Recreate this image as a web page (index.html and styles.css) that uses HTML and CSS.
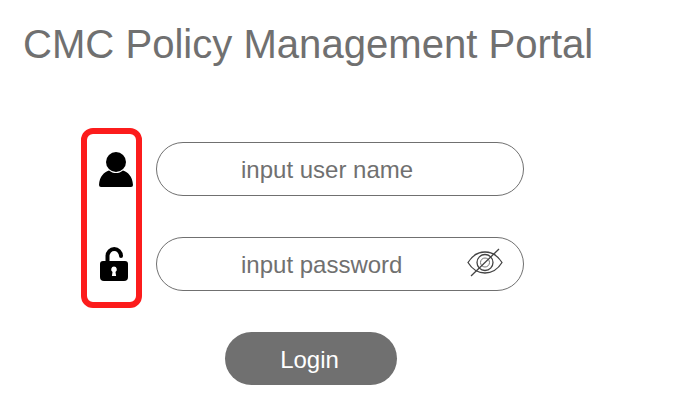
FILE: index.html
```html
<!DOCTYPE html>
<html>
  <head>
    <title>CMC Policy Management Portal</title>
    <link rel="stylesheet" href="styles.css">
  </head>
  <body>
    <h1 class="title">CMC Policy Management Portal</h1>
    <div class="login">
      <div class="icons">
        <svg class="icon-user" viewBox="0 0 34 35" width="34" height="35">
          <circle cx="17" cy="10" r="10" fill="#000"/>
          <path d="M10 18.500c4 3.400 10 3.400 14 0 5 1.600 9.500 6 10 14.500q0 2-2 2H2q-2 0-2-2c.5-8.500 5-12.900 10-14.500z" fill="#000"/>
        </svg>
        <svg class="icon-lock" viewBox="0 0 28 34" width="28" height="34">
          <path d="M7.500 15V9a6.750 7 0 0 1 13.500 0" fill="none" stroke="#000" stroke-width="4" stroke-linecap="round"/>
          <path d="M3 14h22q3 0 3 3v13q0 4-4 4H4q-4 0-4-4V17q0-3 3-3z" fill="#000"/>
          <path d="M14 19.500a3 3 0 0 1 1.500 5.500l.6 4h-4.200l.6-4a3 3 0 0 1 1.500-5.500z" fill="#fff"/>
        </svg>
      </div>
      <div class="fields">
        <div class="field">input user name</div>
        <div class="field">
          input password
          <svg class="icon-eye" viewBox="0 0 36 29" width="36" height="29">
            <path d="M1 14.500C5 8 11 4 18 4s13 4 17 10.500C31 21 25 25 18 25S5 21 1 14.500z" fill="none" stroke="#444" stroke-width="1.300"/>
            <circle cx="18" cy="14.500" r="8" fill="none" stroke="#444" stroke-width="1.300"/>
            <circle cx="18" cy="14.500" r="4.500" fill="none" stroke="#777" stroke-width="1"/>
            <path d="M32 1 4 28" fill="none" stroke="#444" stroke-width="1.300"/>
          </svg>
        </div>
        <button class="login-btn">Login</button>
      </div>
    </div>
  </body>
</html>
```

FILE: styles.css
```css
body {
  margin: 0;
  background-color: #fff;
  color: #707070;
  font-family: "Liberation Sans", Arial, sans-serif;
}
.title {
  margin: 0;
  padding: 21px 0 0 23px;
  font-size: 40.08px;
  font-weight: normal;
  line-height: 46px;
}
.login {
  display: flex;
  align-items: flex-start;
  margin: 61px 0 0 81px;
}
.icons {
  display: flex;
  flex-direction: column;
  box-sizing: border-box;
  width: 61px;
  height: 180px;
  padding: 18px 0 0 12px;
  border: 6px solid #fc1c1c;
  border-radius: 12px;
}
.icon-lock {
  margin: 60px 0 0 1px;
}
.fields {
  display: flex;
  flex-direction: column;
  align-items: flex-start;
  margin: 14px 0 0 14px;
}
.field {
  position: relative;
  box-sizing: border-box;
  width: 368px;
  height: 54px;
  margin-bottom: 41px;
  padding-left: 84px;
  border: 1px solid #707070;
  border-radius: 27px;
  font-size: 24px;
  line-height: 54px;
}
.icon-eye {
  position: absolute;
  top: 10px;
  right: 20px;
}
.login-btn {
  width: 172px;
  height: 53px;
  margin: 0 0 0 69px;
  padding: 2px 3px 0 0;
  border: none;
  border-radius: 27px;
  background-color: #707070;
  color: #fff;
  font-family: inherit;
  font-size: 24px;
}
```
